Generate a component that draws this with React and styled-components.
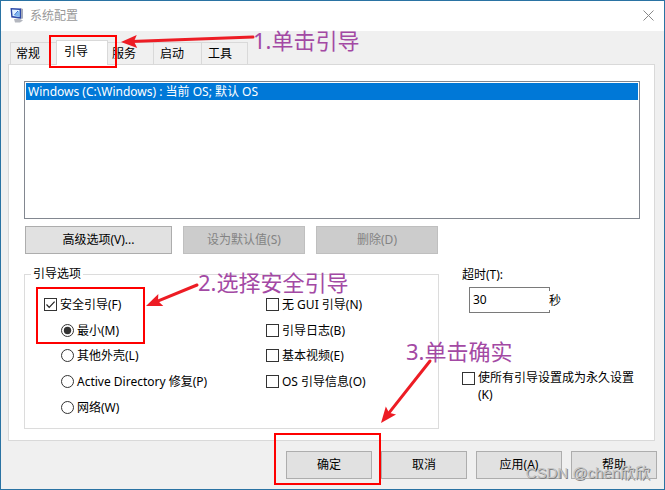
import React, { useState } from 'react'
import styled, { createGlobalStyle, css } from 'styled-components'

const GlobalStyle = createGlobalStyle`
    * {
        box-sizing: border-box;
    }

    body {
        margin: 0;
        background: #f0f0f0;
        color: #000;
        font: 12px/16px 'Noto Sans', 'Noto Sans CJK SC', sans-serif;
    }

    button,
    input {
        margin: 0;
        font: inherit;
        color: inherit;
    }
`

const Window = styled.main`
    position: relative;
    display: flex;
    flex-direction: column;
    min-height: 100vh;
    border: 1px solid #2a73a3;
    overflow: hidden;
`

const TitleBar = styled.header`
    display: flex;
    align-items: center;
    gap: 5px;
    height: 30px;
    padding: 0 10px 2px 8px;
    background: #fff;
`

const Title = styled.h1`
    flex: 1;
    margin: 0;
    padding-top: 2px;
    font-size: 12px;
    font-weight: 400;
    color: #999;
`

const CloseButton = styled.button`
    display: flex;
    padding: 0;
    border: 0;
    background: none;
`

const Body = styled.div`
    flex: 1;
    padding: 9px 9px 0 7px;
`

const TabStrip = styled.div`
    position: relative;
    z-index: 1;
    display: flex;
    align-items: flex-end;
    height: 24px;
    padding-left: 2px;
`

const Tab = styled.button`
    width: 48px;
    height: 22px;
    padding: 0 0 0 6px;
    border: solid #d9d9d9;
    border-width: 1px 1px 0 0;
    background: #f0f0f0;
    text-align: left;

    &:first-child {
        padding-left: 5px;
        border-left-width: 1px;
    }

    &:nth-child(5) {
        width: 46px;
    }

    ${ props => props.$active && css`
        z-index: 1;
        width: 52px;
        height: 25px;
        margin: 0 -2px -1px;
        padding: 0 0 2px 7px;
        border-left-width: 1px;
        background: #fff;
    ` }
`

const Panel = styled.section`
    padding: 16px 14px 11px 15px;
    border: 1px solid #d9d9d9;
    background: #fff;
`

const EntryList = styled.ul`
    min-height: 138px;
    margin: 0;
    padding: 1px;
    border: 1px solid #828790;
    list-style: none;
`

const Entry = styled.li`
    padding: 1px 2px 0;
    background: #0078d7;
    color: #fff;
`

const PushButton = styled.button`
    width: ${ props => props.$width }px;
    height: 28px;
    padding: 0;
    border: 1px solid #adadad;
    background: #e1e1e1;

    &:disabled {
        border-color: #bfbfbf;
        background: #ccc;
        color: #838383;
    }
`

const EntryActions = styled.div`
    display: flex;
    gap: 11px;
    padding: 7px 0 0 1px;
`

const Settings = styled.div`
    display: grid;
    grid-template-columns: 415fr 178fr;
    gap: 23px;
    margin-top: 12px;
`

const Group = styled.fieldset`
    min-width: 0;
    margin: 0;
    padding: 10px 8px 8px 19px;
    border: 1px solid #dcdcdc;
`

const Legend = styled.legend`
    margin-left: -13px;
    padding: 0 2px;
`

const Options = styled.div`
    position: relative;
    display: grid;
    grid-template-columns: 222px 1fr;
    grid-template-rows: repeat(5, 1fr);
    grid-auto-flow: column;
    min-height: 128px;
`

const OptionLabel = styled.label`
    display: flex;
    align-items: ${ props => props.$multiline ? 'flex-start' : 'center' };
    gap: 3px;
    padding-left: ${ props => props.$nested ? 17 : 0 }px;
`

const OptionText = styled.span`
    padding-top: ${ props => props.$multiline ? 0 : 1 }px;
`

const Mark = styled.span`
    display: grid;
    flex: none;
    margin-top: ${ props => props.$multiline ? 3 : 0 }px;

    input,
    svg {
        grid-area: 1 / 1;
    }

    svg {
        pointer-events: none;
    }
`

const Tick = styled.input`
    appearance: none;
    width: 13px;
    height: 13px;
    border: 1px solid #333;
    border-radius: ${ props => props.type === 'radio' ? '50%' : 0 };
    background: #fff;
`

const Timeout = styled.div`
    display: flex;
    flex-direction: column;
    align-items: flex-start;
    gap: 4px;
    padding-top: 1px;
`

const TimeoutRow = styled.div`
    display: flex;
    align-items: center;
    padding-left: 7px;
`

const TimeoutInput = styled.input`
    width: 81px;
    height: 26px;
    padding: 0 3px 2px;
    border: 1px solid #7a7a7a;
    background: #fff;
`

const Unit = styled.span`
    margin-left: -1px;
    line-height: 19px;
    background: #fff;
`

const Permanent = styled.div`
    margin-top: 56px;
    line-height: 17px;
`

const Footer = styled.footer`
    display: flex;
    justify-content: flex-end;
    gap: 9px;
    padding: 10px 7px;
`

const Anchor = styled.div`
    position: relative;
    z-index: 2;
`

const Highlight = styled.div`
    position: absolute;
    z-index: 3;
    left: ${ props => props.$x }px;
    top: ${ props => props.$y }px;
    width: ${ props => props.$w }px;
    height: ${ props => props.$h }px;
    border: 2px solid #fe0000;
    pointer-events: none;
`

const Note = styled.span`
    position: absolute;
    z-index: 3;
    left: ${ props => props.$x }px;
    top: ${ props => props.$y }px;
    color: #a349a4;
    font-size: 22px;
    line-height: 28px;
    white-space: nowrap;
    pointer-events: none;
`

const ArrowSvg = styled.svg`
    position: absolute;
    z-index: 3;
    left: 0;
    top: 0;
    width: 1px;
    height: 1px;
    overflow: visible;
    pointer-events: none;
`

const Watermark = styled.span`
    position: absolute;
    z-index: 3;
    right: 14px;
    bottom: 6px;
    color: #c4c4c4;
    font: 15px/20px 'Liberation Sans', 'Noto Sans CJK SC', sans-serif;
    text-shadow: 1px 1px 0 #808080;
    pointer-events: none;
`

const Arrow = ({ from, to }) => {
    const [x1, y1] = from
    const [x2, y2] = to
    const length = Math.hypot(x2 - x1, y2 - y1)
    const angle = Math.atan2(y2 - y1, x2 - x1) * 180 / Math.PI

    return (
        <ArrowSvg aria-hidden='true'>
            <g transform={ `translate(${x2} ${y2}) rotate(${angle})` } fill='#ed1c24'>
                <path
                    d={ `M${-length} 0H-10` }
                    stroke='#ed1c24'
                    strokeWidth='3'
                    strokeLinecap='round'
                />
                <path d='M0 0L-16 -6.5L-13 0L-16 6.5Z' />
            </g>
        </ArrowSvg>
    )
}

const ComputerIcon = () => (
    <svg width='16' height='16' viewBox='0 0 16 16' aria-hidden='true'>
        <path d='M5 12l5-.5 4 2-3 2H6z' fill='#b4b7bf' />
        <path d='M11.500 1l2.500 1v9.500l-2.500.5z' fill='#a3a9ba' />
        <path d='M1.500 1l10.500.4v10.400L2.300 10.600z' fill='#2c49a8' />
        <path d='M3 2.500l7.500.4v7L3.600 9z' fill='#dff1ff' />
        <path d='M5.200 8.600l5.300-5.100v6.400z' fill='#7db8f2' />
        <path d='M9 4L5.500 8' stroke='#2a62c9' strokeWidth='1' />
    </svg>
)

const Option = ({ type = 'checkbox', nested, multiline, label, ...input }) => (
    <OptionLabel $nested={ nested } $multiline={ multiline }>
        <Mark $multiline={ multiline }>
            <Tick type={ type } { ...input } />
            { input.checked && (
                <svg width='13' height='13' viewBox='0 0 13 13' aria-hidden='true'>
                    { type === 'radio'
                        ? <circle cx='6.5' cy='6.5' r='3.700' fill='#333' />
                        : <path d='M2.500 6.500l2.700 2.800L10.600 3.600' fill='none' stroke='#222' strokeWidth='1.200' />
                    }
                </svg>
            ) }
        </Mark>
        <OptionText $multiline={ multiline }>{ label }</OptionText>
    </OptionLabel>
)

const TABS = ['常规', '引导', '服务', '启动', '工具']

const MODES = [
    { value: 'minimal', label: '最小(M)' },
    { value: 'shell', label: '其他外壳(L)' },
    { value: 'repair', label: 'Active Directory 修复(P)' },
    { value: 'network', label: '网络(W)' }
]

const FLAGS = [
    { name: 'noGui', label: '无 GUI 引导(N)' },
    { name: 'bootLog', label: '引导日志(B)' },
    { name: 'baseVideo', label: '基本视频(E)' },
    { name: 'osInfo', label: 'OS 引导信息(O)' }
]

const App = () => {
    const [tab, setTab] = useState('引导')
    const [mode, setMode] = useState('minimal')
    const [timeout, setTimeoutValue] = useState('30')
    const [flags, setFlags] = useState({ safeBoot: true })

    const flag = name => ({
        name,
        checked: Boolean(flags[name]),
        onChange: event => setFlags({ ...flags, [name]: event.target.checked })
    })

    return (
        <Window>
            <GlobalStyle />
            <TitleBar>
                <ComputerIcon />
                <Title>系统配置</Title>
                <CloseButton type='button' aria-label='关闭'>
                    <svg width='11' height='11' viewBox='0 0 11 11'>
                        <path d='M.5.5l10 10M10.500.5l-10 10' stroke='#888' />
                    </svg>
                </CloseButton>
            </TitleBar>
            <Body>
                <TabStrip role='tablist'>
                    { TABS.map(name => (
                        <Tab
                            key={ name }
                            type='button'
                            role='tab'
                            aria-selected={ tab === name }
                            $active={ tab === name }
                            onClick={ () => setTab(name) }>
                            { name }
                        </Tab>
                    )) }
                    <Highlight $x={ 41 } $y={ -5 } $w={ 68 } $h={ 33 } />
                    <Arrow from={ [245, -3] } to={ [113, 2] } />
                    <Note $x={ 245 } $y={ -14 }>1.单击引导</Note>
                </TabStrip>
                <Panel>
                    <EntryList>
                        <Entry>Windows (C:\Windows) : 当前 OS; 默认 OS</Entry>
                    </EntryList>
                    <EntryActions>
                        <PushButton type='button' $width={ 147 }>高级选项(V)...</PushButton>
                        <PushButton type='button' $width={ 122 } disabled>设为默认值(S)</PushButton>
                        <PushButton type='button' $width={ 122 } disabled>删除(D)</PushButton>
                    </EntryActions>
                    <Settings>
                        <Group>
                            <Legend>引导选项</Legend>
                            <Options>
                                <Option label='安全引导(F)' { ...flag('safeBoot') } />
                                { MODES.map(({ value, label }) => (
                                    <Option
                                        key={ value }
                                        type='radio'
                                        name='mode'
                                        nested
                                        label={ label }
                                        checked={ mode === value }
                                        onChange={ () => setMode(value) }
                                    />
                                )) }
                                { FLAGS.map(({ name, label }) => (
                                    <Option key={ name } label={ label } { ...flag(name) } />
                                )) }
                                <Highlight $x={ -8 } $y={ -5 } $w={ 109 } $h={ 57 } />
                                <Arrow from={ [153, -7] } to={ [102, 14] } />
                                <Note $x={ 154 } $y={ -24 }>2.选择安全引导</Note>
                            </Options>
                        </Group>
                        <div>
                            <Timeout>
                                <label htmlFor='timeout'>超时(T):</label>
                                <TimeoutRow>
                                    <TimeoutInput
                                        id='timeout'
                                        type='text'
                                        value={ timeout }
                                        onChange={ event => setTimeoutValue(event.target.value) }
                                    />
                                    <Unit>秒</Unit>
                                </TimeoutRow>
                            </Timeout>
                            <Permanent>
                                <Option
                                    multiline
                                    label='使所有引导设置成为永久设置(K)'
                                    { ...flag('permanent') }
                                />
                            </Permanent>
                        </div>
                    </Settings>
                </Panel>
            </Body>
            <Footer>
                <Anchor>
                    <PushButton type='button' $width={ 86 }>确定</PushButton>
                    <Highlight $x={ -12 } $y={ -18 } $w={ 107 } $h={ 52 } />
                    <Arrow from={ [144, -90] } to={ [95, -28] } />
                    <Note $x={ 120 } $y={ -114 }>3.单击确实</Note>
                </Anchor>
                <PushButton type='button' $width={ 86 }>取消</PushButton>
                <PushButton type='button' $width={ 86 }>应用(A)</PushButton>
                <PushButton type='button' $width={ 86 }>帮助</PushButton>
            </Footer>
            <Watermark>CSDN @chen欣欣</Watermark>
        </Window>
    )
}

export default App
